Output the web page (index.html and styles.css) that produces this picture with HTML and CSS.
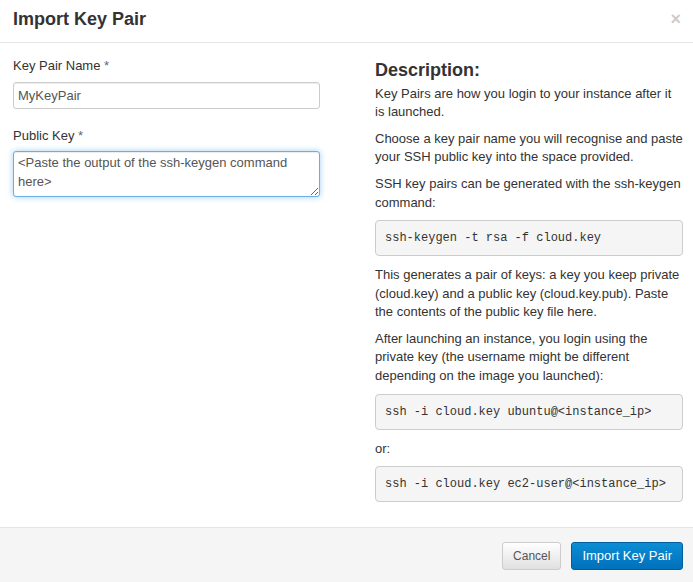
FILE: index.html
```html
<!DOCTYPE html>
<html>
<head>
<meta charset="utf-8">
<link rel="stylesheet" href="styles.css">
</head>
<body>
<div class="modal">
  <div class="modal-header">
    <h3 class="modal-title">Import Key Pair</h3>
    <span class="close">&times;</span>
  </div>
  <div class="modal-body">
    <div class="col-form">
      <div class="form-group">
        <label class="control-label">Key Pair Name <span class="req">*</span></label>
        <input class="form-control" type="text" value="MyKeyPair">
      </div>
      <div class="form-group">
        <label class="control-label">Public Key <span class="req">*</span></label>
        <textarea class="form-control textarea focused">&lt;Paste the output of the ssh-keygen command here&gt;</textarea>
      </div>
    </div>
    <div class="col-help">
      <h3 class="help-title">Description:</h3>
      <p>Key Pairs are how you login to your instance after it is launched.</p>
      <p>Choose a key pair name you will recognise and paste your SSH public key into the space provided.</p>
      <p>SSH key pairs can be generated with the ssh-keygen command:</p>
      <pre>ssh-keygen -t rsa -f cloud.key</pre>
      <p>This generates a pair of keys: a key you keep private (cloud.key) and a public key (cloud.key.pub). Paste the contents of the public key file here.</p>
      <p>After launching an instance, you login using the private key (the username might be different depending on the image you launched):</p>
      <pre>ssh -i cloud.key ubuntu@&lt;instance_ip&gt;</pre>
      <p>or:</p>
      <pre>ssh -i cloud.key ec2-user@&lt;instance_ip&gt;</pre>
    </div>
  </div>
  <div class="modal-footer">
    <button class="btn btn-default">Cancel</button>
    <button class="btn btn-primary">Import Key Pair</button>
  </div>
</div>
</body>
</html>
```
FILE: styles.css
```css
* { box-sizing: border-box; }
html, body {
  margin: 0;
  padding: 0;
  background: #fff;
}
body {
  font-family: "Liberation Sans", Arial, sans-serif;
  font-size: 13px;
  line-height: 1.428571;
  color: #333;
}
.modal {
  width: 693px;
  height: 582px;
  display: flex;
  flex-direction: column;
}
.modal-header {
  display: flex;
  justify-content: space-between;
  align-items: flex-start;
  padding: 6px 12px 10px 13px;
  border-bottom: 1px solid #e5e5e5;
  height: 43px;
}
.modal-title {
  margin: 0;
  font-size: 18px;
  font-weight: bold;
  line-height: 26px;
  color: #333;
}
.close {
  font-size: 18px;
  font-weight: bold;
  line-height: 26px;
  color: #000;
  opacity: 0.2;
}
.modal-body {
  display: grid;
  grid-template-columns: 307px 1fr;
  column-gap: 55px;
  padding: 14px 10px 15px 13px;
  flex: 1;
  align-items: start;
}
.form-group {
  margin-bottom: 18px;
}
.control-label {
  display: block;
  margin-bottom: 6px;
  font-weight: normal;
  color: #333;
}
.req { color: #5a6c7e; }
.form-control {
  display: block;
  width: 100%;
  height: 27px;
  padding: 3px 4px;
  font-family: "Liberation Sans", Arial, sans-serif;
  font-size: 13px;
  line-height: 1.428571;
  color: #555;
  background: #fff;
  border: 1px solid #ccc;
  border-radius: 3px;
  box-shadow: inset 0 1px 1px rgba(0,0,0,.075);
  margin: 0;
}
.textarea {
  height: 46px;
  padding: 2px 4px;
  resize: vertical;
  overflow: hidden;
}
.focused {
  border-color: #66afe9;
  outline: 0;
  box-shadow: inset 0 1px 1px rgba(0,0,0,.075), 0 0 6px rgba(102,175,233,.6);
}
.help-title {
  margin: 4px 0 4px;
  font-size: 18px;
  font-weight: bold;
  line-height: 1.1;
  color: #333;
}
.col-help p {
  margin: 0 -1px 8px 0;
}
.col-help pre {
  margin: 0 0 10px;
  padding: 8px 9px;
  font-family: "Liberation Mono", "Courier New", monospace;
  font-size: 12px;
  line-height: 18px;
  color: #333;
  background: #f5f5f5;
  border: 1px solid #ccc;
  border-radius: 4px;
  white-space: pre;
}
.modal-footer {
  display: flex;
  justify-content: flex-end;
  align-items: flex-start;
  gap: 10px;
  padding: 14px 10px 0 13px;
  height: 56px;
  border-top: 1px solid #e5e5e5;
  background: #f5f5f5;
}
.btn {
  font-family: "Liberation Sans", Arial, sans-serif;
  font-size: 13px;
  line-height: 18px;
  height: 28px;
  padding: 4px 10px;
  border-radius: 3px;
  border: 1px solid;
  margin: 0;
  cursor: pointer;
}
.btn-default {
  font-size: 12px;
  color: #555;
  background: linear-gradient(#fff, #e0e0e0);
  border-color: #ccc;
}
.btn-primary {
  color: #fff;
  background: linear-gradient(#0c8ed4, #0170bb);
  border-color: #025d9e;
}
```
